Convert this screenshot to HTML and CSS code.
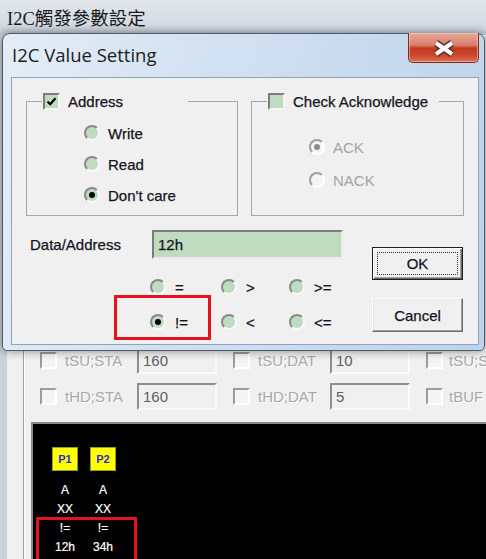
FILE: index.html
```html
<!DOCTYPE html>
<html lang="zh-Hant">
  <head>
    <meta charset="UTF-8" />
    <title>I2C觸發參數設定</title>
    <link rel="stylesheet" href="styles.css">
  </head>
  <body>
    <!-- ventana de fondo -->
    <div class="main-window">
      <div class="main-title">I2C觸發參數設定</div>
      <div class="main-client">
        <div class="main-group">
          <div class="timing">
            <div class="timing-row">
              <div class="timing-cell"><span class="box-off"></span><span class="timing-label">tSU;STA</span><span class="timing-input">160</span></div>
              <div class="timing-cell"><span class="box-off"></span><span class="timing-label">tSU;DAT</span><span class="timing-input">10</span></div>
              <div class="timing-cell last"><span class="box-off"></span><span class="timing-label">tSU;STO</span></div>
            </div>
            <div class="timing-row">
              <div class="timing-cell"><span class="box-off"></span><span class="timing-label">tHD;STA</span><span class="timing-input">160</span></div>
              <div class="timing-cell"><span class="box-off"></span><span class="timing-label">tHD;DAT</span><span class="timing-input">5</span></div>
              <div class="timing-cell last"><span class="box-off"></span><span class="timing-label">tBUF</span></div>
            </div>
          </div>

          <div class="scope">
            <div class="probe">
              <div class="probe-tag">P1</div>
              <div class="probe-line first">A</div>
              <div class="probe-line">XX</div>
              <div class="probe-line">!=</div>
              <div class="probe-line">12h</div>
            </div>
            <div class="probe">
              <div class="probe-tag">P2</div>
              <div class="probe-line first">A</div>
              <div class="probe-line">XX</div>
              <div class="probe-line">!=</div>
              <div class="probe-line">34h</div>
            </div>
            <div class="mark mark-scope"></div>
          </div>
        </div>
      </div>
    </div>

    <!-- dialogo -->
    <div class="dialog">
      <div class="dlg-title">
        <span class="dlg-caption">I2C Value Setting</span>
        <div class="dlg-close">
          <svg width="26" height="19" viewBox="0 0 26 19">
            <path d="M5 4 L21 15 M21 4 L5 15" stroke="#5b3128" stroke-width="7" fill="none" />
            <path d="M5 4 L21 15 M21 4 L5 15" stroke="#ffffff" stroke-width="4" fill="none" />
          </svg>
        </div>
      </div>

      <div class="dlg-client">
        <div class="groups">
          <fieldset class="group group-addr">
            <legend><span class="legend-inner"><span class="chk"><svg width="13" height="13" viewBox="0 0 13 13"><path d="M2.5 6.5 L5.2 9.2 L10.5 3.2" stroke="#000" stroke-width="2.2" fill="none" /></svg></span>Address</span></legend>
            <div class="radio-list">
              <div class="radio"><span class="rb"></span>Write</div>
              <div class="radio"><span class="rb"></span>Read</div>
              <div class="radio"><span class="rb on"></span>Don't care</div>
            </div>
          </fieldset>
          <fieldset class="group group-ack">
            <legend><span class="legend-inner"><span class="chk"></span>Check Acknowledge</span></legend>
            <div class="radio-list">
              <div class="radio disabled"><span class="rb on"></span>ACK</div>
              <div class="radio disabled"><span class="rb"></span>NACK</div>
            </div>
          </fieldset>
        </div>

        <div class="lower">
          <div class="lower-left">
            <div class="data-row">
              <span class="data-label">Data/Address</span>
              <div class="data-input">12h</div>
            </div>
            <div class="ops">
              <div class="radio"><span class="rb"></span>=</div>
              <div class="radio"><span class="rb"></span>&gt;</div>
              <div class="radio"><span class="rb"></span>&gt;=</div>
              <div class="radio"><span class="rb on"></span>!=</div>
              <div class="radio"><span class="rb"></span>&lt;</div>
              <div class="radio"><span class="rb"></span>&lt;=</div>
            </div>
          </div>
          <div class="buttons">
            <button class="btn btn-ok"><span>OK</span></button>
            <button class="btn btn-cancel">Cancel</button>
          </div>
        </div>

        <div class="mark mark-dialog"></div>
      </div>
    </div>
  </body>
</html>
```

FILE: styles.css
```css
* {
  box-sizing: border-box;
}

body {
  margin: 0;
  width: 486px;
  height: 559px;
  overflow: hidden;
  position: relative;
  background: #f0f0f0;
  font-family: "Liberation Sans", Arial, sans-serif;
  color: #111;
}

/* ventana de fondo */
.main-title {
  height: 35px;
  padding: 9px 0 0 7px;
  font-family: "Liberation Serif", "Noto Sans CJK TC", serif;
  font-size: 18.5px;
  line-height: 20px;
  color: #1b1b1b;
  background: linear-gradient(#e2e7ec, #d4dbe3 70%, #c2cad4);
}

.main-client {
  display: flex;
  height: 524px;
  border-left: 7px solid #cdd2d8;
}

.main-group {
  flex: 1;
  min-width: 0;
  margin-left: 16px;
  border-left: 1px solid #a0a0a0;
  box-shadow: inset 1px 0 0 #ffffff;
  overflow: hidden;
}

.timing {
  padding: 312px 0 0 16px;
  display: flex;
  flex-direction: column;
  gap: 9px;
}

.timing-row {
  display: flex;
  height: 27px;
}

.timing-cell {
  flex: 0 0 193px;
  display: flex;
  align-items: center;
}

.timing-cell.last {
  flex: 1;
  min-width: 0;
  overflow: hidden;
}

.box-off {
  width: 17px;
  height: 17px;
  flex: none;
  border: 2px solid;
  border-color: #9c9c9c #ffffff #ffffff #9c9c9c;
  background: #f4f4f4;
}

.timing-label {
  width: 72px;
  flex: none;
  margin-left: 8px;
  font-size: 15px;
  color: #a8a8a8;
  text-shadow: 1px 1px 0 #ffffff;
  white-space: nowrap;
}

.timing-cell.last .timing-label {
  margin-left: 6px;
  width: auto;
}

.timing-input {
  width: 80px;
  height: 27px;
  flex: none;
  padding-left: 4px;
  border: 2px solid;
  border-color: #8e8e8e #fafafa #fafafa #8e8e8e;
  font-size: 15px;
  line-height: 23px;
  color: #5e5e5e;
}

.scope {
  position: relative;
  display: flex;
  height: 140px;
  margin: 12px 0 0 7px;
  padding: 23px 0 0 13px;
  background: #000;
  border-top: 2px solid #8a8a8a;
  border-left: 2px solid #8a8a8a;
}

.probe {
  width: 38px;
  display: flex;
  flex-direction: column;
  align-items: center;
}

.probe-tag {
  width: 26px;
  height: 24px;
  background: #ffff00;
  border: 1px solid #9a9a20;
  color: #2b2bd0;
  font-size: 11px;
  font-weight: bold;
  line-height: 22px;
  text-align: center;
}

.probe-line {
  font-size: 12px;
  line-height: 19px;
  color: #ffffff;
  -webkit-text-stroke: 0.2px #ffffff;
}

.probe-line.first {
  margin-top: 10px;
}

.mark {
  position: absolute;
  border: 3px solid #e3141d;
}

.mark-scope {
  left: 3px;
  top: 93px;
  width: 101px;
  height: 46px;
}

/* dialogo */
.dialog {
  position: absolute;
  left: 2px;
  top: 33px;
  width: 483px;
  height: 318px;
  display: flex;
  flex-direction: column;
  padding: 0 5px 5px 8px;
  border: 1px solid #4d5b6a;
  border-radius: 8px 8px 5px 5px;
  background: linear-gradient(100deg, #e4edf7 0%, #d2e1f1 40%, #bed3ea 100%);
  box-shadow: 0 0 10px rgba(0, 0, 0, 0.45);
}

.dlg-title {
  height: 43px;
  display: flex;
  align-items: flex-start;
}

.dlg-caption {
  padding: 8px 0 0 1px;
  font-family: "Open Sans", "Noto Sans", sans-serif;
  font-size: 18.5px;
  line-height: 25px;
  color: #1c1c1c;
}

.dlg-close {
  margin-left: auto;
  margin-top: -1px;
  width: 71px;
  height: 30px;
  display: flex;
  align-items: center;
  justify-content: center;
  padding-top: 2px;
  border: 1px solid #7d2a1c;
  border-top: none;
  border-radius: 0 0 5px 5px;
  background: linear-gradient(#e8a898 0%, #d97e6b 42%, #c33a20 52%, #c8452b 75%, #d9735a 100%);
  box-shadow: inset 0 0 0 1px rgba(255, 220, 210, 0.5);
}

.dlg-client {
  flex: 1;
  position: relative;
  padding: 14px 14px 0 14px;
  background: #f0f0f0;
  border: 1px solid #8fa3ba;
  font-size: 15px;
  color: #14141e;
  -webkit-text-stroke: 0.25px currentColor;
}

.groups {
  display: flex;
  gap: 13px;
}

.group {
  margin: 0;
  padding: 0;
  height: 124px;
  border: 1px solid #a6a6a6;
  min-width: 0;
}

.group-addr {
  width: 212px;
}

.group-ack {
  width: 213px;
}

.group legend {
  margin-left: 15px;
  padding: 0 0 0 1px;
  height: 18px;
}

.legend-inner {
  display: flex;
  align-items: center;
  height: 18px;
}

.group-addr legend {
  width: 146px;
}

.group-ack legend {
  width: 172px;
}

.chk {
  width: 17px;
  height: 17px;
  margin-right: 8px;
  border: 2px solid;
  border-color: #7c7c7c #f6f6f6 #f6f6f6 #7c7c7c;
  background: #c0dcc0;
  display: flex;
  align-items: center;
  justify-content: center;
}

.radio-list {
  display: flex;
  flex-direction: column;
  padding-left: 57px;
}

.group-addr .radio-list {
  margin-top: 15px;
  gap: 15px;
}

.group-ack .radio-list {
  margin-top: 29px;
  gap: 17px;
}

.radio {
  display: flex;
  align-items: center;
  height: 16px;
  gap: 8px;
  white-space: nowrap;
}

.rb {
  position: relative;
  width: 16px;
  height: 16px;
  flex: none;
  border-radius: 50%;
  border: 2px solid;
  border-color: #8a8a8a #f8f8f8 #f8f8f8 #8a8a8a;
  background: #c0dcc0;
}

.rb.on::after {
  content: "";
  position: absolute;
  left: 3px;
  top: 3px;
  width: 6px;
  height: 6px;
  border-radius: 50%;
  background: #000;
}

.radio.disabled {
  color: #a4a4a4;
  -webkit-text-stroke: 0;
}

.radio.disabled .rb {
  background: #f4f4f4;
  border-color: #a0a0a0 #ffffff #ffffff #a0a0a0;
}

.radio.disabled .rb.on::after {
  background: #8c8c8c;
}

.lower {
  display: flex;
  margin-left: 4px;
}

.data-row {
  display: flex;
  align-items: center;
  margin-top: 14px;
}

.data-label {
  width: 122px;
}

.data-input {
  width: 191px;
  height: 29px;
  padding-left: 4px;
  border: 2px solid;
  border-color: #7c7c7c #ececec #ececec #7c7c7c;
  background: #c0dcc0;
  line-height: 25px;
}

.ops {
  display: grid;
  grid-template-columns: 71px 68px auto;
  row-gap: 19px;
  margin: 20px 0 0 120px;
}

.ops .radio {
  gap: 9px;
}

.buttons {
  margin: 31px 1px 0 auto;
  display: flex;
  flex-direction: column;
  gap: 18px;
}

.btn {
  width: 91px;
  padding: 0;
  font-family: "Liberation Sans", Arial, sans-serif;
  font-size: 15px;
  color: #14141e;
  -webkit-text-stroke: 0.25px currentColor;
  background: #f0f0f0;
}

.btn-ok {
  height: 33px;
  padding: 4px;
  border: 1px solid #1e1e1e;
  box-shadow: inset 1px 1px 0 #ffffff, inset -1px -1px 0 #6a6a6a, inset -2px -2px 0 #a0a0a0;
}

.btn-ok span {
  display: block;
  height: 100%;
  border: 1px dotted #333;
  line-height: 21px;
}

.btn-cancel {
  height: 34px;
  border: 1px solid;
  border-color: #ffffff #6a6a6a #6a6a6a #ffffff;
  box-shadow: inset -1px -1px 0 #a0a0a0, inset 1px 1px 0 #e6e6e6;
}

.mark-dialog {
  left: 102px;
  top: 217px;
  width: 97px;
  height: 45px;
}
```
